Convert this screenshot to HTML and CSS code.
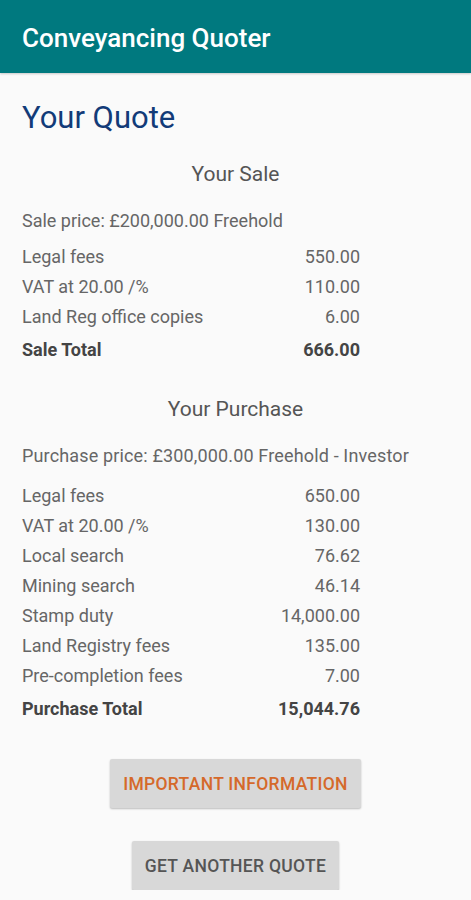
FILE: index.html
```html
<!DOCTYPE html>
<html lang="en">
<head>
    <meta charset="UTF-8">
    <meta name="viewport" content="width=device-width, initial-scale=1.0">
    <title>Conveyancing Quoter</title>
    <link rel="stylesheet" href="styles.css">
</head>
<body>
    <div class="app-bar">Conveyancing Quoter</div>

    <div class="content">
        <h1>Your Quote</h1>

        <div class="section">
            <h2>Your Sale</h2>
            <p class="price">Sale price: £200,000.00 Freehold</p>
            <div class="rows">
                <div class="row"><span>Legal fees</span><span>550.00</span></div>
                <div class="row"><span>VAT at 20.00 /%</span><span>110.00</span></div>
                <div class="row"><span>Land Reg office copies</span><span>6.00</span></div>
                <div class="row total"><span>Sale Total</span><span>666.00</span></div>
            </div>
        </div>

        <div class="section">
            <h2>Your Purchase</h2>
            <p class="price purchase-price">Purchase price: £300,000.00 Freehold - Investor</p>
            <div class="rows">
                <div class="row"><span>Legal fees</span><span>650.00</span></div>
                <div class="row"><span>VAT at 20.00 /%</span><span>130.00</span></div>
                <div class="row"><span>Local search</span><span>76.62</span></div>
                <div class="row"><span>Mining search</span><span>46.14</span></div>
                <div class="row"><span>Stamp duty</span><span>14,000.00</span></div>
                <div class="row"><span>Land Registry fees</span><span>135.00</span></div>
                <div class="row"><span>Pre-completion fees</span><span>7.00</span></div>
                <div class="row total"><span>Purchase Total</span><span>15,044.76</span></div>
            </div>
        </div>

        <div class="actions">
            <button class="btn btn-info">Important Information</button>
            <button class="btn">Get Another Quote</button>
        </div>
    </div>
</body>
</html>
```

FILE: styles.css
```css
body {
    margin: 0;
    font-family: Roboto, "Liberation Sans", sans-serif;
    background-color: #fafafa;
    color: #666;
}
.app-bar {
    background-color: #00797f;
    color: #fff;
    height: 73px;
    padding: 3px 22px 0;
    display: flex;
    align-items: center;
    font-size: 26px;
    font-weight: 500;
    box-sizing: border-box;
    box-shadow: 0 1px 2px rgba(0, 0, 0, 0.2);
}
.content {
    padding: 0 22px;
}
h1 {
    margin: 0;
    padding-top: 27px;
    font-size: 31px;
    font-weight: 400;
    color: #123b78;
    line-height: 36px;
}
h2 {
    margin: 0;
    text-align: center;
    font-size: 21px;
    font-weight: 400;
    color: #555;
    line-height: 24px;
}
.section {
    margin-top: 26px;
}
.section + .section {
    margin-top: 29px;
}
.price {
    margin: 23px 0 9px;
    font-size: 18px;
    line-height: 24px;
}
.purchase-price {
    margin-bottom: 13px;
    letter-spacing: 0.15px;
}
.rows {
    width: 338px;
}
.row {
    display: flex;
    justify-content: space-between;
    font-size: 18px;
    line-height: 30px;
}
.row.total {
    font-weight: 700;
    color: #444;
    line-height: 36px;
}
.actions {
    display: flex;
    flex-direction: column;
    align-items: center;
    gap: 33px;
    margin-top: 32px;
}
.btn {
    font-family: inherit;
    font-size: 17.5px;
    font-weight: 500;
    text-transform: uppercase;
    color: #555;
    background-color: #d8d8d8;
    border: none;
    border-radius: 2px;
    height: 49px;
    padding: 0 13px;
    letter-spacing: 0.3px;
    box-shadow: 0 1px 2px rgba(0, 0, 0, 0.25);
}
.btn-info {
    color: #d5692a;
}
```
